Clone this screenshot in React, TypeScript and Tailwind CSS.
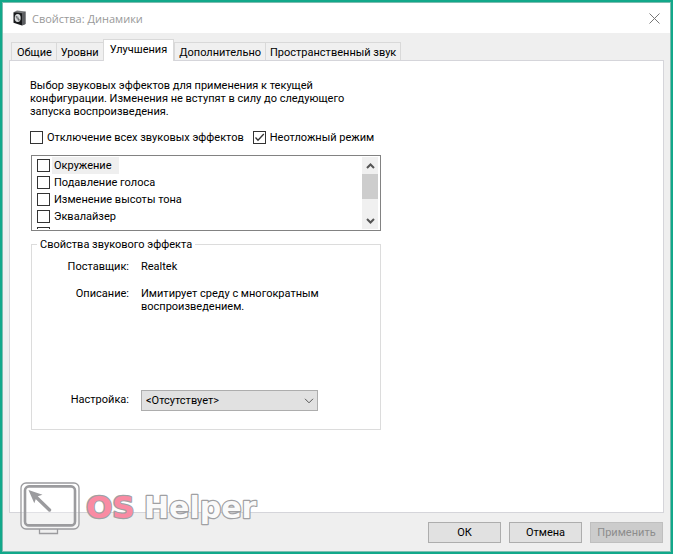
import { useState } from 'react';

const TABS = ['Общие', 'Уровни', 'Улучшения', 'Дополнительно', 'Пространственный звук'];

const EFFECTS = ['Окружение', 'Подавление голоса', 'Изменение высоты тона', 'Эквалайзер'];

type CheckProps = {
  label?: string;
  checked: boolean;
  onChange: (value: boolean) => void;
  selected?: boolean;
};

function Check({ label, checked, onChange, selected = false }: CheckProps) {
  return (
    <label className="flex h-[17px] items-center">
      <span className="grid shrink-0">
        <input
          type="checkbox"
          checked={checked}
          onChange={(e) => onChange(e.target.checked)}
          aria-label={label ? undefined : 'Эффект'}
          className="col-start-1 row-start-1 size-[13px] appearance-none border border-[#333333] bg-white"
        />
        {checked && (
          <svg
            viewBox="0 0 13 13"
            className="pointer-events-none col-start-1 row-start-1 size-[13px]"
            fill="none"
            stroke="#333333"
            strokeWidth="1.3"
          >
            <path d="M2.5 6.5 5 9.2 10.8 3" />
          </svg>
        )}
      </span>
      {label && (
        <span
          className={`ml-[2px] px-[2px] pt-px leading-[16px] whitespace-nowrap ${selected ? 'bg-[#efefef] pr-[7px]' : ''}`}
        >
          {label}
        </span>
      )}
    </label>
  );
}

function SpeakerIcon() {
  return (
    <svg viewBox="0 0 14 16" className="h-4 w-[14px] shrink-0">
      <path d="M1 2 4 .5l8.5 1V14l-3 1.5z" fill="#77797b" />
      <path d="M9 3.2l3.5-1.7V14L9 15.5z" fill="#5c5e61" />
      <path d="M.5 2.2 9 3.2v12.3L.5 12.8z" fill="#17191b" />
      <ellipse cx="4.7" cy="8" rx="3" ry="4" fill="#d9dcdd" />
      <path d="M3 6.2 6.4 10.6" stroke="#6b6e70" strokeWidth="1.6" />
      <circle cx="4.4" cy="7.6" r="1.1" fill="#8d9092" />
    </svg>
  );
}

function Watermark() {
  return (
    <div className="pointer-events-none absolute bottom-4 left-[17px] flex items-end">
      <svg viewBox="0 0 60 53" className="h-[53px] w-[60px]" fill="none" stroke="#9b9b9e">
        <path d="M19.5 47v4.5h18V47" strokeWidth="1.3" />
        <rect x="1" y="1" width="58" height="46" rx="5" fill="#ffffff" fillOpacity=".3" strokeWidth="1.3" />
        <rect x="5" y="4.4" width="50" height="39" rx="4" strokeWidth="2.6" />
        <path d="M15 14 29.5 28" strokeWidth="3.4" strokeLinecap="round" />
        <path d="M8.5 8l14 4.7-4.6 1.6-1.8 2-1.8 4.9z" fill="#9b9b9e" stroke="none" />
      </svg>
      <svg viewBox="0 0 180 53" className="h-[53px] w-[180px]" fontFamily="'DejaVu Sans', sans-serif" fontWeight="bold">
        <g stroke="#a0a0a3" strokeWidth="2.4" strokeLinejoin="round" paintOrder="stroke">
          <text x="6" y="36" fontSize="31" fill="#f98ba3">OS</text>
          <text x="64" y="36" fontSize="30" fill="#fafafa">Helper</text>
        </g>
      </svg>
    </div>
  );
}

export default function App() {
  const [tab, setTab] = useState(2);
  const [disableAll, setDisableAll] = useState(false);
  const [immediate, setImmediate] = useState(true);
  const [enabled, setEnabled] = useState<string[]>([]);

  function toggleEffect(name: string, on: boolean) {
    setEnabled((prev) => (on ? [...prev, name] : prev.filter((e) => e !== name)));
  }

  return (
    <div className="flex min-h-screen bg-[#12a88a] p-[2px] font-[Roboto,sans-serif] text-[11px] leading-[13px] text-black">
      <div className="relative flex flex-1 flex-col border border-[#7dbdb0] bg-[#efefef]">
        {/* Title bar */}
        <header className="flex h-[30px] items-center bg-white pr-[10px] pl-[10px]">
          <SpeakerIcon />
          <h1 className="ml-[5px] flex-1 font-['Open_Sans',sans-serif] text-[11px] text-[#999999]">
            Свойства: Динамики
          </h1>
          <button type="button" aria-label="Закрыть">
            <svg viewBox="0 0 11 11" className="size-[11px]" stroke="#777777" strokeWidth="1">
              <path d="M.5.5l10 10M10.5.5l-10 10" />
            </svg>
          </button>
        </header>

        <main className="flex flex-1 flex-col px-[6px] pt-[6px]">
          {/* Tabs */}
          <div role="tablist" className="z-1 flex items-end pl-[2px]">
            {TABS.map((name, i) => (
              <button
                key={name}
                type="button"
                role="tab"
                aria-selected={i === tab}
                onClick={() => setTab(i)}
                className={
                  i === tab
                    ? '-mb-px h-[22px] border border-b-0 border-[#d9d9d9] bg-white px-[6px] pb-[2px] whitespace-nowrap'
                    : 'h-[18px] border border-r-0 border-b-0 border-[#d9d9d9] bg-[#f0f0f0] px-1 pt-px whitespace-nowrap first:pl-[5px] last:border-r'
                }
              >
                {name}
              </button>
            ))}
          </div>

          <section className="flex-1 border border-[#d5d5da] bg-white pt-[18px] pl-[20px]">
            <p>
              Выбор звуковых эффектов для применения к текущей
              <br />
              конфигурации. Изменения не вступят в силу до следующего
              <br />
              запуска воспроизведения.
            </p>

            <div className="mt-[11px] flex gap-[7px]">
              <Check label="Отключение всех звуковых эффектов" checked={disableAll} onChange={setDisableAll} />
              <Check label="Неотложный режим" checked={immediate} onChange={setImmediate} />
            </div>

            {/* Effects list */}
            <div className="mt-[9px] ml-px flex h-[76px] w-[350px] border border-[#828282] p-px">
              <ul className="flex-1 overflow-hidden pl-1">
                {EFFECTS.map((name, i) => (
                  <li key={name}>
                    <Check
                      label={name}
                      checked={enabled.includes(name)}
                      onChange={(on) => toggleEffect(name, on)}
                      selected={i === 0}
                    />
                  </li>
                ))}
                <li>
                  <Check checked={enabled.includes('')} onChange={(on) => toggleEffect('', on)} />
                </li>
              </ul>
              <div className="mr-px flex w-4 flex-col bg-[#f0f0f0]">
                <button type="button" aria-label="Вверх" className="grid h-[17px] place-items-center">
                  <svg viewBox="0 0 9 6" className="h-[6px] w-[9px]" fill="none" stroke="#555555" strokeWidth="2">
                    <path d="M1 5l3.5-3.5L8 5" />
                  </svg>
                </button>
                <div className="h-[25px] bg-[#cdcdcd]" />
                <button type="button" aria-label="Вниз" className="mt-auto grid h-[17px] place-items-center">
                  <svg viewBox="0 0 9 6" className="h-[6px] w-[9px]" fill="none" stroke="#555555" strokeWidth="2">
                    <path d="M1 1l3.5 3.5L8 1" />
                  </svg>
                </button>
              </div>
            </div>

            {/* Effect properties */}
            <fieldset className="mt-[7px] ml-px w-[350px] border border-[#dcdcdc] px-[5px] pb-[18px]">
              <legend className="px-[3px]">Свойства звукового эффекта</legend>
              <dl className="mt-[9px] grid grid-cols-[92px_1fr] gap-x-[12px] gap-y-[14px]">
                <dt className="text-right">Поставщик:</dt>
                <dd>Realtek</dd>
                <dt className="text-right">Описание:</dt>
                <dd className="h-[97px]">
                  Имитирует среду с многократным
                  <br />
                  воспроизведением.
                </dd>
              </dl>
              <div className="mt-[6px] grid grid-cols-[92px_177px] gap-x-[12px]">
                <label htmlFor="preset" className="pt-[3px] text-right">Настройка:</label>
                <div className="grid items-center">
                  <select
                    id="preset"
                    className="col-start-1 row-start-1 h-[21px] appearance-none border border-[#adadad] bg-[#e1e1e1] pl-1"
                  >
                    <option>&lt;Отсутствует&gt;</option>
                  </select>
                  <svg
                    viewBox="0 0 10 6"
                    className="pointer-events-none col-start-1 row-start-1 mr-1 h-[6px] w-[10px] justify-self-end"
                    fill="none"
                    stroke="#555555"
                  >
                    <path d="M1 .8l4 4 4-4" />
                  </svg>
                </div>
              </div>
            </fieldset>
          </section>
        </main>

        <footer className="flex justify-end gap-2 px-[7px] pt-[9px] pb-2">
          <button type="button" className="h-[21px] w-[73px] border border-[#adadad] bg-[#e1e1e1]">ОК</button>
          <button type="button" className="h-[21px] w-[73px] border border-[#adadad] bg-[#e1e1e1]">Отмена</button>
          <button
            type="button"
            disabled
            className="h-[21px] w-[73px] border border-[#bfbfbf] bg-[#cccccc] text-[#8c8c8c]"
          >
            Применить
          </button>
        </footer>

        <Watermark />
      </div>
    </div>
  );
}
